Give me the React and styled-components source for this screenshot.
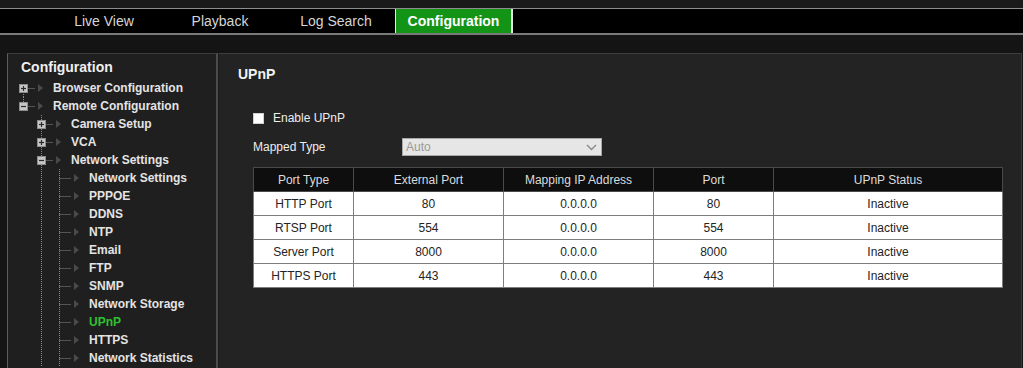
import React from 'react';
import styled, { createGlobalStyle, css } from 'styled-components';

const GlobalStyle = createGlobalStyle`
  *, *::before, *::after { box-sizing: border-box; }
  html, body { margin: 0; padding: 0; height: 100%; background: #151515; }
  body { font-family: "Liberation Sans", Arial, sans-serif; overflow: hidden; }
  #root { height: 100%; }
`;

const Page = styled.div`
  height: 100vh;
  display: flex;
  flex-direction: column;
  background: #151515;
`;

const TopStrip = styled.div`
  flex: none;
  height: 8px;
  background: #1a1a1a;
`;

const NavBar = styled.nav`
  flex: none;
  display: flex;
  height: 27px;
  background: #000;
  border-top: 1px solid #8e8e8e;
  border-bottom: 2px solid #7a7a7a;
  padding-left: 46px;
`;

const Tab = styled.div`
  flex: 0 0 116px;
  display: flex;
  align-items: center;
  justify-content: center;
  font-size: 14px;
  color: #d6d6d6;
  ${(p) =>
    p.$active &&
    css`
      flex-basis: 118px;
      margin-left: 1px;
      background: #139417;
      color: #fff;
      font-weight: bold;
      border-left: 1px solid #e6e6e6;
      border-right: 2px solid #e6e6e6;
    `}
`;

const Spacer = styled.div`
  flex: none;
  height: 18px;
  background: #141414;
`;

const Main = styled.div`
  flex: 1;
  min-height: 0;
  display: flex;
  padding: 0 1px 0 7px;
`;

const LeftPanel = styled.aside`
  flex: none;
  width: 211px;
  background: #1f1f1f;
  border-left: 1px solid #5c5c5c;
  border-top: 1px solid #3d3d3d;
  border-right: 2px solid #4c4c4c;
  padding-top: 4px;
  overflow: hidden;
`;

const PanelTitle = styled.div`
  height: 18px;
  line-height: 18px;
  padding-left: 13px;
  font-size: 14px;
  font-weight: bold;
  color: #f0f0f0;
`;

const Tree = styled.div`
  margin-top: 3px;
  padding-left: 11px;
`;

const TreeRow = styled.div`
  display: flex;
  align-items: center;
  height: 18px;
  white-space: nowrap;
`;

const Guide = styled.span`
  flex: none;
  width: 18px;
  height: 18px;
  ${(p) =>
    p.$line &&
    css`
      background: linear-gradient(#8a8a8a 50%, transparent 50%) 4px 0 / 1px 2px repeat-y;
    `}
`;

const Arrow = styled.span`
  flex: none;
  width: 0;
  height: 0;
  margin-left: 3px;
  border-left: 5px solid #4a4a4a;
  border-top: 4px solid transparent;
  border-bottom: 4px solid transparent;
`;

const NodeLabel = styled.span`
  margin-left: 10px;
  font-size: 12px;
  font-weight: bold;
  color: ${(p) => (p.$active ? '#2fc12f' : '#e4e4e4')};
`;

const RightPanel = styled.section`
  flex: 1;
  min-width: 0;
  background: #232323;
  border-top: 1px solid #3d3d3d;
  border-left: 1px solid #1a1a1a;
  border-right: 1px solid #383838;
  padding: 11px 0 0 19px;
`;

const SectionTitle = styled.h2`
  margin: 0;
  height: 18px;
  line-height: 18px;
  font-size: 14px;
  font-weight: bold;
  color: #f2f2f2;
`;

const Form = styled.div`
  margin-left: 15px;
`;

const CheckRow = styled.label`
  display: flex;
  align-items: center;
  height: 18px;
  margin-top: 26px;
  font-size: 12px;
  color: #eeeeee;
`;

const CheckBox = styled.span`
  flex: none;
  width: 11px;
  height: 11px;
  background: #fff;
  border: 1px solid #d0d0d0;
  margin-right: 9px;
`;

const FieldRow = styled.div`
  display: flex;
  align-items: center;
  height: 18px;
  margin-top: 11px;
`;

const FieldLabel = styled.span`
  flex: none;
  width: 149px;
  font-size: 12px;
  color: #eeeeee;
`;

const FakeSelect = styled.div`
  width: 200px;
  height: 18px;
  display: flex;
  align-items: center;
  justify-content: space-between;
  padding: 0 4px 0 3px;
  background: #e6e6e6;
  border: 1px solid #a8a8a8;
  font-size: 12px;
  color: #9a9a9a;
`;

const PortTable = styled.table`
  margin-top: 11px;
  width: 749px;
  border-collapse: collapse;
  table-layout: fixed;
  font-size: 12px;
`;

const Th = styled.th`
  height: 24px;
  padding: 0;
  background: #0e0e0e;
  color: #dcdcdc;
  font-weight: normal;
  border: 1px solid #4a4a4a;
`;

const Td = styled.td`
  height: 24px;
  padding: 0;
  background: #fff;
  color: #242424;
  text-align: center;
  border: 1px solid #7d7d7d;
`;

function Connector({ kind, line }) {
  const y1 = line === 'bottom' ? 9 : 0;
  const y2 = line === 'top' ? 9 : 18;
  return (
    <svg width="16" height="18" viewBox="0 0 16 18" style={{ flex: 'none', display: 'block' }}>
      {line && (
        <line x1="4.5" y1={y1} x2="4.5" y2={y2} stroke="#8a8a8a" strokeWidth="1" strokeDasharray="1 1" />
      )}
      <line x1="4.5" y1="9.5" x2="16" y2="9.5" stroke="#8a8a8a" strokeWidth="1" strokeDasharray="1 1" />
      {kind !== 'leaf' && (
        <g>
          <rect x="0.5" y="5.5" width="8" height="8" fill="#c6c6c6" stroke="#8c8c8c" />
          <line x1="2" y1="9.5" x2="7" y2="9.5" stroke="#2a2a2a" strokeWidth="1.2" />
          {kind === 'plus' && <line x1="4.5" y1="7" x2="4.5" y2="12" stroke="#2a2a2a" strokeWidth="1.2" />}
        </g>
      )}
    </svg>
  );
}

const leaves = [
  'Network Settings',
  'PPPOE',
  'DDNS',
  'NTP',
  'Email',
  'FTP',
  'SNMP',
  'Network Storage',
  'UPnP',
  'HTTPS',
  'Network Statistics',
];

const treeNodes = [
  { label: 'Browser Configuration', guides: [], kind: 'plus', line: 'bottom' },
  { label: 'Remote Configuration', guides: [], kind: 'minus', line: 'top' },
  { label: 'Camera Setup', guides: [false], kind: 'plus', line: 'full' },
  { label: 'VCA', guides: [false], kind: 'plus', line: 'full' },
  { label: 'Network Settings', guides: [false], kind: 'minus', line: 'full' },
  ...leaves.map((l) => ({ label: l, guides: [false, true], kind: 'leaf', line: 'full', active: l === 'UPnP' })),
];

const ports = [
  ['HTTP Port', '80', '0.0.0.0', '80', 'Inactive'],
  ['RTSP Port', '554', '0.0.0.0', '554', 'Inactive'],
  ['Server Port', '8000', '0.0.0.0', '8000', 'Inactive'],
  ['HTTPS Port', '443', '0.0.0.0', '443', 'Inactive'],
];

export default function App() {
  return (
    <Page>
      <GlobalStyle />
      <TopStrip />
      <NavBar>
        <Tab>Live View</Tab>
        <Tab>Playback</Tab>
        <Tab>Log Search</Tab>
        <Tab $active>Configuration</Tab>
      </NavBar>
      <Spacer />
      <Main>
        <LeftPanel>
          <PanelTitle>Configuration</PanelTitle>
          <Tree>
            {treeNodes.map((n, i) => (
              <TreeRow key={i}>
                {n.guides.map((g, j) => (
                  <Guide key={j} $line={g} />
                ))}
                <Connector kind={n.kind} line={n.line} />
                <Arrow />
                <NodeLabel $active={n.active}>{n.label}</NodeLabel>
              </TreeRow>
            ))}
          </Tree>
        </LeftPanel>
        <RightPanel>
          <SectionTitle>UPnP</SectionTitle>
          <Form>
            <CheckRow>
              <CheckBox />
              Enable UPnP
            </CheckRow>
            <FieldRow>
              <FieldLabel>Mapped Type</FieldLabel>
              <FakeSelect>
                <span>Auto</span>
                <svg width="11" height="7" viewBox="0 0 11 7">
                  <polyline points="1,1 5.5,5.5 10,1" fill="none" stroke="#8a8a8a" strokeWidth="1.4" />
                </svg>
              </FakeSelect>
            </FieldRow>
            <PortTable>
              <colgroup>
                <col style={{ width: 100 }} />
                <col style={{ width: 150 }} />
                <col style={{ width: 150 }} />
                <col style={{ width: 120 }} />
                <col style={{ width: 229 }} />
              </colgroup>
              <thead>
                <tr>
                  <Th>Port Type</Th>
                  <Th>External Port</Th>
                  <Th>Mapping IP Address</Th>
                  <Th>Port</Th>
                  <Th>UPnP Status</Th>
                </tr>
              </thead>
              <tbody>
                {ports.map((r) => (
                  <tr key={r[0]}>
                    {r.map((c, k) => (
                      <Td key={k}>{c}</Td>
                    ))}
                  </tr>
                ))}
              </tbody>
            </PortTable>
          </Form>
        </RightPanel>
      </Main>
    </Page>
  );
}
